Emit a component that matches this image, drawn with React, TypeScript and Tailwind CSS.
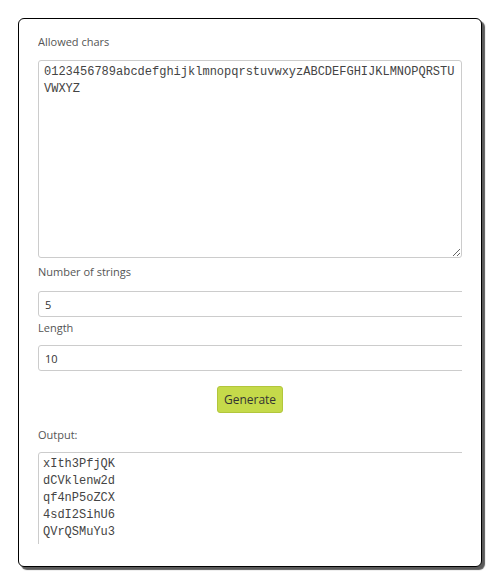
const allowed =
  "0123456789abcdefghijklmnopqrstuvwxyzABCDEFGHIJKLMNOPQRSTUVWXYZ";

const output = ["xIth3PfjQK", "dCVklenw2d", "qf4nP5oZCX", "4sdI2SihU6", "QVrQSMuYu3"].join("\n");

export default function App() {
  return (
    <div className="min-h-[583px] bg-white pt-[18px] pl-[18px] font-['Open_Sans',sans-serif]">
      {/* Card */}
      <div className="w-[464px] h-[549px] bg-white border border-black rounded-[6px] shadow-[3px_3px_1px_#5a5a5a] pt-[15px] px-[19px]">
        <div className="h-[510px] overflow-hidden">
          <label className="block text-[11px] leading-4 text-[#555]">Allowed chars</label>
          <textarea
            readOnly
            value={allowed}
            className="block mt-[10px] w-full h-[198px] border border-[#ccc] rounded-[3px] pl-[5px] pr-[2px] pt-[3px] font-['Liberation_Mono',monospace] text-[12px] leading-[17px] text-[#444] break-all outline-none"
          />

          <label className="block mt-[6px] text-[11px] leading-4 text-[#555]">Number of strings</label>
          <input
            readOnly
            value="5"
            className="block mt-[11px] w-full box-content h-[24px] border border-[#ccc] rounded-[3px] px-[6px] text-[11px] text-[#333] outline-none"
          />

          <label className="block mt-[3px] text-[11px] leading-4 text-[#555]">Length</label>
          <input
            readOnly
            value="10"
            className="block mt-[9px] w-full box-content h-[24px] border border-[#ccc] rounded-[3px] px-[6px] text-[11px] text-[#333] outline-none"
          />

          <div className="mt-[15px] flex justify-center">
            <button className="w-[66px] h-[27px] bg-[#c5da4a] border border-[#b2c63c] rounded-[3px] text-[12px] text-[#333]">
              Generate
            </button>
          </div>

          <label className="block mt-[14px] text-[11px] leading-4 text-[#555]">Output:</label>
          <textarea
            readOnly
            value={output}
            className="block mt-[9px] w-full box-content h-[200px] border border-[#ccc] rounded-[3px] pl-[4px] pr-[8px] pt-[3px] font-['Liberation_Mono',monospace] text-[12px] leading-[17px] text-[#444] resize-none outline-none"
          />
        </div>
      </div>
    </div>
  );
}
